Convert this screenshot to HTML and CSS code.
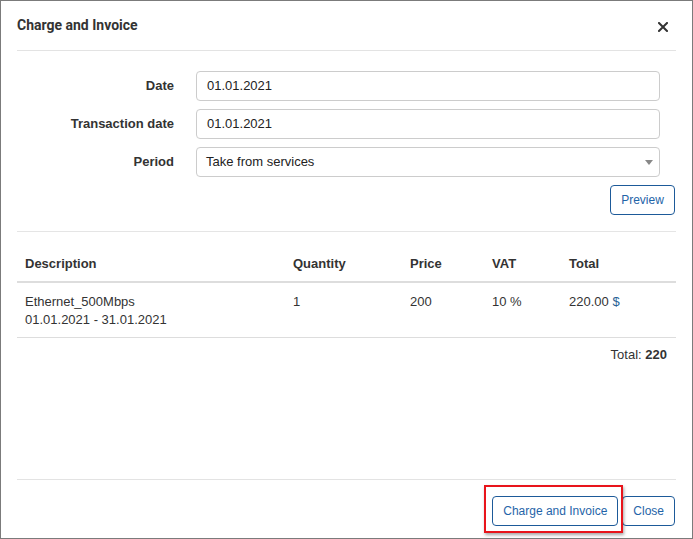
FILE: index.html
```html
<!DOCTYPE html>
<html>
<head>
<meta charset="utf-8">
<link rel="stylesheet" href="styles.css">
</head>
<body>
<div class="modal">
  <div class="modal-header">
    <h4 class="modal-title">Charge and Invoice</h4>
    <button class="close" aria-label="Close">
      <svg width="10" height="10" viewBox="0 0 10 10"><path d="M1 1L9 9M9 1L1 9" stroke="#333" stroke-width="2" stroke-linecap="square"/></svg>
    </button>
  </div>
  <div class="modal-body">
    <form class="form">
      <label class="form-label">Date</label>
      <div class="form-control">01.01.2021</div>
      <label class="form-label">Transaction date</label>
      <div class="form-control">01.01.2021</div>
      <label class="form-label">Period</label>
      <div class="form-control select">Take from services<span class="caret"></span></div>
    </form>
    <div class="actions">
      <button class="btn">Preview</button>
    </div>
    <div class="divider"></div>
    <table class="table">
      <colgroup>
        <col class="c-desc"><col class="c-qty"><col class="c-price"><col class="c-vat"><col class="c-total">
      </colgroup>
      <thead>
        <tr><th>Description</th><th>Quantity</th><th>Price</th><th>VAT</th><th>Total</th></tr>
      </thead>
      <tbody>
        <tr>
          <td>Ethernet_500Mbps<br>01.01.2021 - 31.01.2021</td>
          <td>1</td>
          <td>200</td>
          <td>10 %</td>
          <td>220.00 <span class="cur">$</span></td>
        </tr>
      </tbody>
    </table>
    <div class="grand-total">Total: <b>220</b></div>
  </div>
  <div class="modal-footer">
    <span class="mark-wrap">
      <button class="btn">Charge and Invoice</button>
      <span class="highlight"></span>
    </span>
    <button class="btn">Close</button>
  </div>
</div>
</body>
</html>
```
FILE: styles.css
```css
* { box-sizing: border-box; }
html, body { margin: 0; padding: 0; background: #fff; }
body {
  font-family: "Liberation Sans", Arial, sans-serif;
  font-size: 13px;
  line-height: 1.42857;
  color: #333;
}
.modal {
  width: 693px;
  height: 539px;
  border: 1px solid #7b7b7b;
  display: flex;
  flex-direction: column;
  padding: 0 16px;
}
.modal-header {
  height: 50px;
  border-bottom: 1px solid #e3e3e3;
  display: flex;
  align-items: center;
  justify-content: space-between;
  padding-bottom: 2px;
}
.modal-title {
  margin: 0;
  font-family: Roboto, "Liberation Sans", sans-serif;
  font-weight: 700;
  font-size: 14px;
  line-height: 18px;
  color: #333;
}
.close {
  border: 0;
  background: none;
  padding: 0;
  margin: 4px 8px 0 0;
  width: 10px;
  height: 10px;
  display: flex;
}
.modal-body {
  flex: 1;
  display: flex;
  flex-direction: column;
  padding-top: 20px;
}
.form {
  display: grid;
  grid-template-columns: 157px 464px;
  column-gap: 22px;
  row-gap: 8px;
  margin: 0;
}
.form-label {
  font-weight: 700;
  text-align: right;
  align-self: center;
  line-height: 18px;
}
.form-control {
  height: 30px;
  border: 1px solid #cccccc;
  border-radius: 4px;
  padding: 0 10px;
  display: flex;
  align-items: center;
  color: #222;
  position: relative;
}
.select { padding-left: 9px; }
.caret {
  position: absolute;
  right: 6px;
  top: 12px;
  width: 0;
  height: 0;
  border-left: 4px solid transparent;
  border-right: 4px solid transparent;
  border-top: 5px solid #888;
}
.actions {
  display: flex;
  justify-content: flex-end;
  margin-top: 8px;
  padding-right: 1px;
}
.btn {
  font-family: "Liberation Sans", Arial, sans-serif;
  font-size: 12px;
  height: 30px;
  padding: 0 10px;
  border: 1px solid #1d5a99;
  border-radius: 4px;
  background: #fff;
  color: #1f64a8;
  line-height: 18px;
}
.actions .btn { width: 65px; padding: 0; }
.divider {
  border-top: 1px solid #e5e5e5;
  margin-top: 16px;
}
.table {
  width: 100%;
  border-collapse: collapse;
  table-layout: fixed;
  margin-top: 13px;
}
.c-desc { width: 268px; }
.c-qty { width: 117px; }
.c-price { width: 82px; }
.c-vat { width: 77px; }
.c-total { width: 115px; }
.table th {
  text-align: left;
  font-weight: 700;
  padding: 10px 8px 7px;
  border-bottom: 2px solid #dddddd;
}
.table td {
  vertical-align: top;
  padding: 10px 8px 7px;
  border-bottom: 1px solid #dddddd;
}
.cur { color: #2a5f95; }
.grand-total {
  text-align: right;
  padding: 8px 9px 0 0;
}
.grand-total b { font-weight: 700; }
.modal-footer {
  border-top: 1px solid #e3e3e3;
  display: flex;
  justify-content: flex-end;
  align-items: flex-start;
  padding: 16px 1px 12px 0;
  gap: 4px;
}
.mark-wrap {
  position: relative;
  display: inline-flex;
}
.highlight {
  position: absolute;
  top: -11px;
  left: -8px;
  right: -5px;
  bottom: -7px;
  border: 2px solid #e8141b;
  box-shadow: 1px 2px 3px rgba(0,0,0,0.35);
  pointer-events: none;
}
```
